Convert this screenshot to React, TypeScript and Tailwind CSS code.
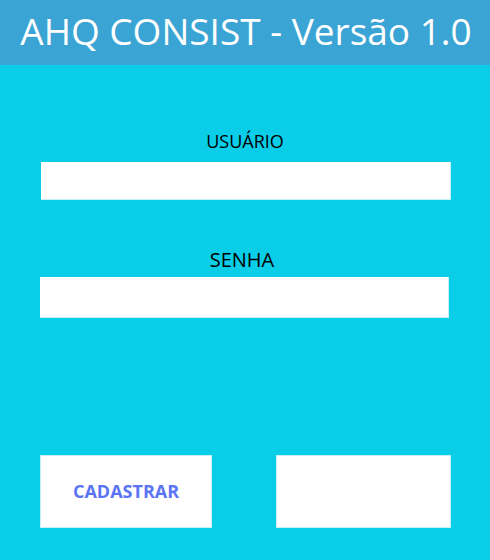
import React from 'react';

const font = { fontFamily: '"Open Sans", "Noto Sans", sans-serif' };

export default function App() {
  return (
    <div className="w-[490px] h-[560px] bg-[#0acde8] flex flex-col overflow-hidden" style={font}>
      {/* Header */}
      <header className="h-[65px] bg-[#3aa4d4] flex justify-center pt-[6px]">
        <h1 className="text-[37px] leading-[50px] text-white whitespace-nowrap pl-[2px]">AHQ CONSIST - Versão 1.0</h1>
      </header>

      {/* Form */}
      <div className="flex flex-col">
        <label className="mt-[64px] text-center text-[18px] leading-[24px] text-black">USUÁRIO</label>
        <input
          type="text"
          className="mt-[9px] ml-[41px] w-[410px] h-[38px] bg-white border-r border-b border-[#c6f1f8] outline-none px-2"
        />

        <label className="mt-[46px] text-center text-[20px] leading-[27px] text-black pr-[6px]">SENHA</label>
        <input
          type="password"
          className="mt-[4px] ml-[40px] w-[409px] h-[41px] bg-white border-r border-b border-[#c6f1f8] outline-none px-2"
        />

        <div className="mt-[137px] flex items-start">
          <button className="ml-[40px] w-[172px] h-[73px] bg-white border border-[#c6f1f8] text-[18px] font-bold text-[#5b74f5]">
            CADASTRAR
          </button>
          <button className="ml-[64px] w-[175px] h-[73px] bg-white border border-[#c6f1f8]"></button>
        </div>
      </div>
    </div>
  );
}
